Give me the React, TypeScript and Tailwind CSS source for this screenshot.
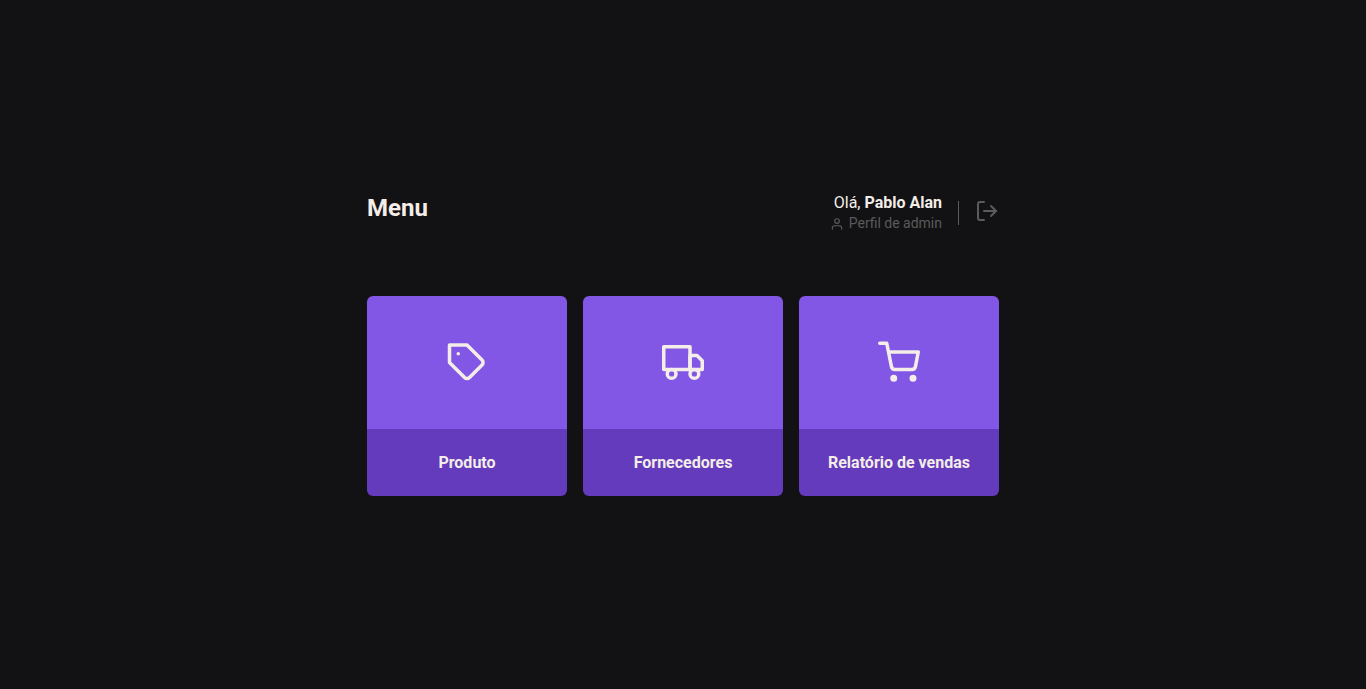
import { FiLogOut, FiShoppingCart, FiTag, FiTruck, FiUser } from "react-icons/fi";
import type { IconType } from "react-icons";

const items: { label: string; Icon: IconType }[] = [
  { label: "Produto", Icon: FiTag },
  { label: "Fornecedores", Icon: FiTruck },
  { label: "Relatório de vendas", Icon: FiShoppingCart },
];

function Header() {
  return (
    <header className="flex h-10 items-start justify-between">
      <h1 className="pt-px text-2xl leading-7 font-bold text-[#f4ede8]">Menu</h1>
      <div className="flex items-center">
        <div className="flex flex-col items-end">
          <p className="text-base leading-5 text-[#f4ede8]">
            Olá, <strong className="font-bold">Pablo Alan</strong>
          </p>
          <p className="flex items-center gap-[5px] text-sm leading-5 text-[#5b5b5b]">
            <FiUser size={14} className="mt-px" />
            Perfil de admin
          </p>
        </div>
        <span className="mx-4 h-6 w-px bg-[#5b5b5b]" />
        <button type="button" aria-label="Sair" className="pb-1 text-[#5b5b5b]">
          <FiLogOut size={24} />
        </button>
      </div>
    </header>
  );
}

export default function App() {
  return (
    <div className="flex h-screen items-start justify-center bg-[#121214] pt-[193px] font-['Roboto',sans-serif]">
      <main className="w-[632px]">
        <Header />
        <nav className="mt-[63px] flex gap-4">
          {items.map(({ label, Icon }) => (
            <a key={label} href="#" className="flex h-[200px] w-[200px] flex-col overflow-hidden rounded-md">
              <span className="flex h-[133px] items-center justify-center bg-[#8257e5] text-[#f4ede8]">
                <Icon className="h-[43px] w-[42px]" />
              </span>
              <span className="flex flex-1 items-center justify-center bg-[#633bbc] text-base font-bold text-[#f4ede8]">
                {label}
              </span>
            </a>
          ))}
        </nav>
      </main>
    </div>
  );
}
